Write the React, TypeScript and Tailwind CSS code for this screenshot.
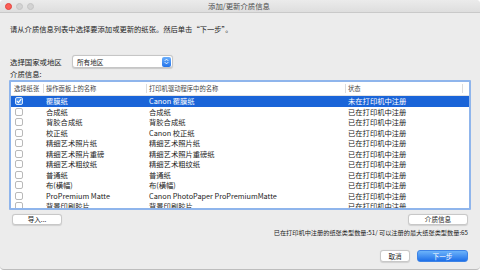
import React from "react";

const FONT = '"Noto Sans CJK SC", "Liberation Sans", sans-serif';

type Row = { name: string; driver: string; status: string };

const rows: Row[] = [
  { name: "覆膜纸", driver: "Canon 覆膜纸", status: "未在打印机中注册" },
  { name: "合成纸", driver: "合成纸", status: "已在打印机中注册" },
  { name: "背胶合成纸", driver: "背胶合成纸", status: "已在打印机中注册" },
  { name: "校正纸", driver: "Canon 校正纸", status: "已在打印机中注册" },
  { name: "精细艺术照片纸", driver: "精细艺术照片纸", status: "已在打印机中注册" },
  { name: "精细艺术照片重磅", driver: "精细艺术照片重磅纸", status: "已在打印机中注册" },
  { name: "精细艺术粗纹纸", driver: "精细艺术粗纹纸", status: "已在打印机中注册" },
  { name: "普通纸", driver: "普通纸", status: "已在打印机中注册" },
  { name: "布(横幅)", driver: "布(横幅)", status: "已在打印机中注册" },
  { name: "ProPremium Matte", driver: "Canon PhotoPaper ProPremiumMatte", status: "已在打印机中注册" },
  { name: "背景印刷胶片", driver: "背景印刷胶片", status: "已在打印机中注册" },
];

function Checkbox({ checked }: { checked: boolean }) {
  if (checked) {
    return (
      <div className="w-[8px] h-[8px] rounded-[2px] bg-[#4f93ef] border border-[#d6e6fb] flex items-center justify-center">
        <svg width="6" height="6" viewBox="0 0 6 6">
          <path d="M1 3.2 L2.4 4.6 L5 1.4" stroke="white" strokeWidth="1.1" fill="none" strokeLinecap="round" strokeLinejoin="round" />
        </svg>
      </div>
    );
  }
  return <div className="w-[8px] h-[8px] rounded-[2px] bg-white border border-[#b9b9b9]" />;
}

function Sep() {
  return <div className="w-px h-[9px] bg-[#dcdcdc] shrink-0" />;
}

export default function App() {
  return (
    <div className="w-[480px] h-[273px] bg-white overflow-hidden" style={{ fontFamily: FONT }}>
      <div className="w-[480px] h-[270px] bg-[#ececec] rounded-[4px] border-b border-[#bdbdbd] flex flex-col overflow-hidden">
        {/* Title bar */}
        <div className="h-[13px] shrink-0 bg-gradient-to-b from-[#ebebeb] to-[#dedede] border-b border-[#c9c9c9] flex items-center relative">
          <div className="flex items-center gap-[4px] pl-[5px]">
            <div className="w-[7px] h-[7px] rounded-full bg-[#fc5f57] border border-[#e0443e]" />
            <div className="w-[7px] h-[7px] rounded-full bg-[#d3d3d3] border border-[#c4c4c4]" />
            <div className="w-[7px] h-[7px] rounded-full bg-[#d3d3d3] border border-[#c4c4c4]" />
          </div>
          <div className="flex-1 text-center text-[7.4px] leading-[12px] text-[#4d4d4d] pr-[36px]">添加/更新介质信息</div>
        </div>

        <div className="flex flex-col px-[10px] text-[#222]">
          <div className="mt-[11px] h-[10px] text-[7.3px] leading-[10px]">请从介质信息列表中选择要添加或更新的纸张。然后单击“下一步”。</div>

          <div className="mt-[21px] h-[13px] flex items-center">
            <div className="text-[7.4px] leading-[10px] w-[62px]">选择国家或地区</div>
            <div className="w-[101px] h-[13px] bg-white border border-[#c6c6c6] rounded-[3px] shadow-[0_0.5px_1px_rgba(0,0,0,0.15)] flex items-center justify-between pl-[4px] pr-[1px]">
              <span className="text-[6.6px] leading-[10px]">所有地区</span>
              <div className="w-[9px] h-[10px] rounded-[2px] bg-gradient-to-b from-[#6aaefb] to-[#2273ea] flex items-center justify-center">
                <svg width="5" height="7" viewBox="0 0 5 7">
                  <path d="M1 2.6 L2.5 1.1 L4 2.6 M1 4.4 L2.5 5.9 L4 4.4" stroke="white" strokeWidth="0.9" fill="none" strokeLinecap="round" strokeLinejoin="round" />
                </svg>
              </div>
            </div>
          </div>

          <div className="mt-[1px] h-[10px] text-[7.4px] leading-[10px]">介质信息:</div>

          {/* Table */}
          <div className="mt-[1px] -ml-[1px] w-[462px] h-[130px] bg-white border-[2px] border-[#8fb5ec] rounded-[1px] overflow-hidden flex flex-col">
            <div className="h-[14px] shrink-0 flex items-center text-[6.3px] leading-[9px] text-[#444] border-b border-[#e4e4e4]">
              <div className="w-[32px] pl-[3px] shrink-0">选择纸张</div>
              <Sep />
              <div className="w-[102px] pl-[2px] shrink-0">操作面板上的名称</div>
              <Sep />
              <div className="w-[198px] pl-[2px] shrink-0">打印机驱动程序中的名称</div>
              <Sep />
              <div className="w-[116px] pl-[2px] shrink-0">状态</div>
              <Sep />
            </div>
            {rows.map((r, i) => {
              const sel = i === 0;
              return (
                <div
                  key={i}
                  className={
                    "h-[10.5px] shrink-0 flex items-center text-[7.3px] leading-[10px] " +
                    (sel ? "bg-[#1a64d8] text-white" : "text-[#222]")
                  }
                >
                  <div className="w-[33px] pl-[4px] shrink-0 flex items-center">
                    <Checkbox checked={sel} />
                  </div>
                  <div className="w-[103px] pl-[2px] shrink-0 whitespace-nowrap">{r.name}</div>
                  <div className="w-[199px] pl-[2px] shrink-0 whitespace-nowrap">{r.driver}</div>
                  <div className="w-[117px] pl-[2px] shrink-0 whitespace-nowrap">{r.status}</div>
                </div>
              );
            })}
          </div>

          <div className="mt-[4px] h-[11px] flex justify-between">
            <button className="ml-[2px] w-[50px] h-[11px] bg-white border border-[#c8c8c8] rounded-[3px] shadow-[0_0.5px_1px_rgba(0,0,0,0.12)] text-[6.6px] leading-[9px] text-[#222] flex items-center justify-center">导入...</button>
            <button className="mr-[2px] w-[60px] h-[11px] bg-white border border-[#c8c8c8] rounded-[3px] shadow-[0_0.5px_1px_rgba(0,0,0,0.12)] text-[6.6px] leading-[9px] text-[#222] flex items-center justify-center">介质信息</button>
          </div>

          <div className="mt-[3px] h-[9px] text-right pr-[2px] text-[6.2px] leading-[9px] text-[#222] whitespace-nowrap">已在打印机中注册的纸张类型数量:51/ 可以注册的最大纸张类型数量:65</div>

          <div className="mt-[13px] h-[12px] flex justify-end gap-[7px] pr-[2px]">
            <button className="w-[30px] h-[12px] bg-white border border-[#c8c8c8] rounded-[3px] shadow-[0_0.5px_1px_rgba(0,0,0,0.12)] text-[6.6px] leading-[9px] text-[#222] flex items-center justify-center">取消</button>
            <button className="w-[51px] h-[12px] bg-gradient-to-b from-[#6cb3fa] to-[#1d6fe8] border border-[#3d83e6] rounded-[3px] text-[6.6px] leading-[9px] text-white flex items-center justify-center">下一步</button>
          </div>
        </div>
      </div>
    </div>
  );
}
